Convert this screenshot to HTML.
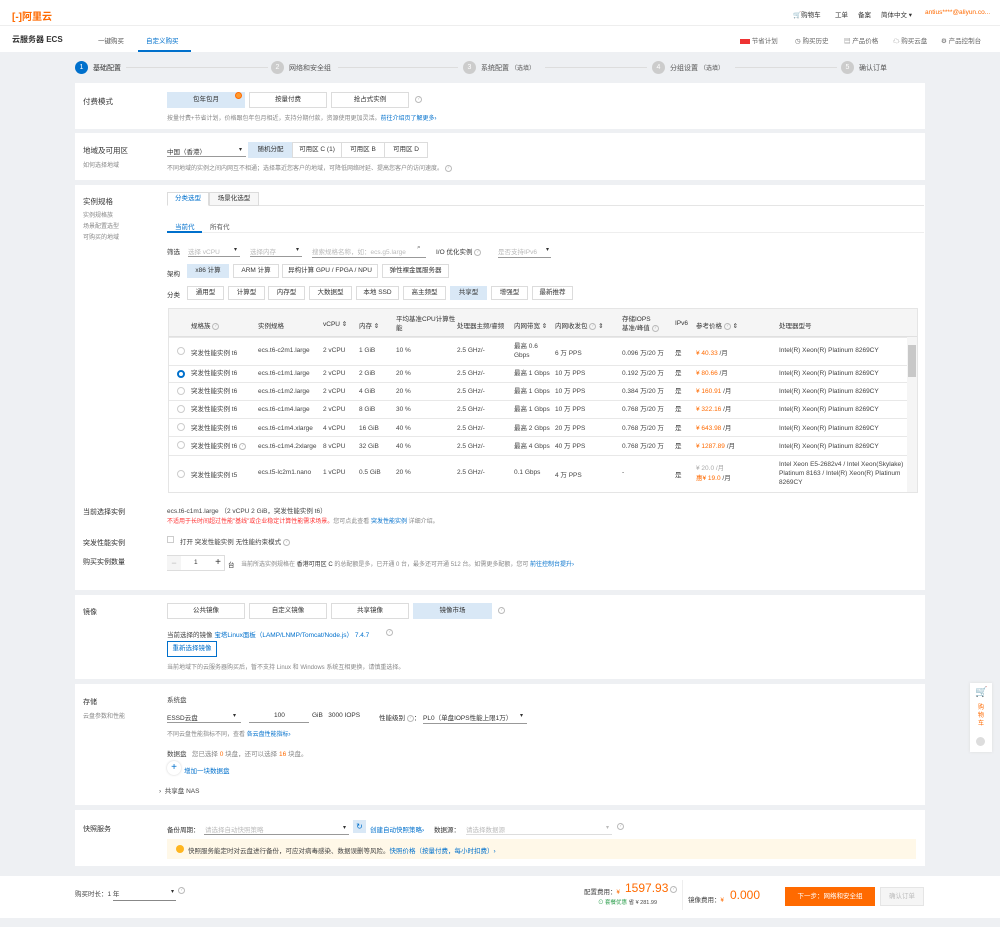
<!DOCTYPE html>
<html><head><meta charset="utf-8"><style>
*{margin:0;padding:0;box-sizing:border-box}
body{width:1000px;height:927px;background:#eef0f3;font-family:"Liberation Sans","Noto Sans CJK SC",sans-serif;font-size:6.5px;color:#333;position:relative;overflow:hidden}
.a{position:absolute;white-space:nowrap}
.w{position:absolute;background:#fff;left:75px;width:850px}
.btn{position:absolute;border:1px solid #dcdcdc;background:#fff;text-align:center;color:#333}
.sel{background:#d9e8f6;border-color:#d9e8f6}
.g{color:#888}.bl{color:#0070cc}.or{color:#ff6a00}
.lbl{font-size:7.5px;color:#333}
.ul{position:absolute;border-bottom:1px solid #999}
.q{display:inline-block;width:7px;height:7px;border:1px solid #bbb;border-radius:50%;font-size:5px;line-height:5px;text-align:center;color:#bbb;vertical-align:middle}
.row{position:absolute;left:169px;width:738px;border-top:1px solid #e8e8e8}
.rd{position:absolute;left:8px;width:8px;height:8px;border:1px solid #ccc;border-radius:50%;background:#fff}
</style></head><body>
<!-- header -->
<div class="a" style="left:0;top:0;width:1000px;height:52px;background:#fff"></div>
<div class="a" style="left:0;top:25px;width:1000px;height:1px;background:#eee"></div>
<div class="a" style="left:12px;top:8px;font-size:10px;color:#ff6a00;font-weight:bold">[-]阿里云</div>
<div class="a" style="left:793px;top:9px;font-size:6.5px">🛒购物车</div>
<div class="a" style="left:835px;top:9px">工单</div>
<div class="a" style="left:858px;top:9px">备案</div>
<div class="a" style="left:881px;top:9px">简体中文 ▾</div>
<div class="a or" style="left:925px;top:9px">antius****@aliyun.co...</div>
<div class="a" style="left:12px;top:34px;font-size:8px;font-weight:bold">云服务器 ECS</div>
<div class="a" style="left:98px;top:35px;color:#555">一键购买</div>
<div class="a bl" style="left:146px;top:35px">自定义购买</div>
<div class="a" style="left:138px;top:50px;width:53px;height:2px;background:#0070cc"></div>
<div class="a" style="left:740px;top:35px;color:#666"><span style="display:inline-block;width:10px;height:5px;background:#e33;vertical-align:middle"></span> 节省计划</div>
<div class="a" style="left:795px;top:35px;color:#666">◷ 购买历史</div>
<div class="a" style="left:844px;top:35px;color:#666">▤ 产品价格</div>
<div class="a" style="left:893px;top:35px;color:#666">☁ 购买云盘</div>
<div class="a" style="left:941px;top:35px;color:#666">⚙ 产品控制台</div>
<!-- steps -->
<div class="a" style="left:75px;top:61px;width:13px;height:13px;border-radius:50%;background:#0070cc;color:#fff;text-align:center;line-height:13px;font-size:7px">1</div>
<div class="a" style="left:93px;top:63px;font-size:7px">基础配置</div>
<div class="a" style="left:126px;top:67px;width:142px;height:1px;background:#ddd"></div>
<div class="a" style="left:271px;top:61px;width:13px;height:13px;border-radius:50%;background:#ccc;color:#fff;text-align:center;line-height:13px;font-size:7px">2</div>
<div class="a" style="left:289px;top:63px;font-size:7px;color:#555">网络和安全组</div>
<div class="a" style="left:338px;top:67px;width:120px;height:1px;background:#ddd"></div>
<div class="a" style="left:463px;top:61px;width:13px;height:13px;border-radius:50%;background:#ccc;color:#fff;text-align:center;line-height:13px;font-size:7px">3</div>
<div class="a" style="left:481px;top:63px;font-size:7px;color:#555">系统配置 <span style="font-size:6px">（选填）</span></div>
<div class="a" style="left:545px;top:67px;width:102px;height:1px;background:#ddd"></div>
<div class="a" style="left:652px;top:61px;width:13px;height:13px;border-radius:50%;background:#ccc;color:#fff;text-align:center;line-height:13px;font-size:7px">4</div>
<div class="a" style="left:670px;top:63px;font-size:7px;color:#555">分组设置 <span style="font-size:6px">（选填）</span></div>
<div class="a" style="left:735px;top:67px;width:102px;height:1px;background:#ddd"></div>
<div class="a" style="left:841px;top:61px;width:13px;height:13px;border-radius:50%;background:#ccc;color:#fff;text-align:center;line-height:13px;font-size:7px">5</div>
<div class="a" style="left:859px;top:63px;font-size:7px;color:#555">确认订单</div>

<!-- 付费模式 -->
<div class="w" style="top:83px;height:46px"></div>
<div class="a lbl" style="left:83px;top:96px">付费模式</div>
<div class="btn sel" style="left:167px;top:92px;width:78px;height:16px;line-height:14px">包年包月</div>
<div class="a" style="left:235px;top:92px;width:7px;height:7px;border-radius:50%;background:#ff9a2e;border:1.5px solid #ff6a00"></div>
<div class="btn" style="left:249px;top:92px;width:78px;height:16px;line-height:14px">按量付费</div>
<div class="btn" style="left:331px;top:92px;width:78px;height:16px;line-height:14px">抢占式实例</div>
<div class="a" style="left:415px;top:96px"><span class="q">?</span></div>
<div class="a g" style="left:167px;top:113px;font-size:6px">按量付费+节省计划，价格跟包年包月相近，支持分期付款，资源使用更加灵活。<span class="bl">前往介绍页了解更多›</span></div>

<!-- 地域 -->
<div class="w" style="top:133px;height:47px"></div>
<div class="a lbl" style="left:83px;top:145px">地域及可用区</div>
<div class="a g" style="left:83px;top:160px;font-size:6px">如何选择地域</div>
<div class="a" style="left:167px;top:146px">中国（香港）</div>
<div class="a" style="left:239px;top:146px;font-size:6px">▾</div>
<div class="ul" style="left:167px;top:156px;width:79px"></div>
<div class="btn sel" style="left:248px;top:142px;width:45px;height:16px;line-height:14px">随机分配</div>
<div class="btn" style="left:292px;top:142px;width:50px;height:16px;line-height:14px">可用区 C (1)</div>
<div class="btn" style="left:341px;top:142px;width:44px;height:16px;line-height:14px">可用区 B</div>
<div class="btn" style="left:384px;top:142px;width:44px;height:16px;line-height:14px">可用区 D</div>
<div class="a g" style="left:167px;top:163px;font-size:6px">不同地域的实例之间内网互不相通；选择靠近您客户的地域，可降低网络时延、提高您客户的访问速度。 <span class="q">?</span></div>

<!-- 实例规格 -->
<div class="w" style="top:185px;height:405px"></div>
<div class="a lbl" style="left:83px;top:196px">实例规格</div>
<div class="a g" style="left:83px;top:211px;font-size:6px;line-height:11px">实例规格族<br>场景配置选型<br>可购买的地域</div>
<div class="btn" style="left:167px;top:192px;width:42px;height:14px;line-height:12px;border-bottom-color:#fff;color:#0070cc">分类选型</div>
<div class="btn" style="left:209px;top:192px;width:50px;height:14px;line-height:12px;background:#f7f7f7">场景化选型</div>
<div class="a" style="left:259px;top:205px;width:665px;height:1px;background:#e5e5e5"></div>
<div class="a bl" style="left:175px;top:221px">当前代</div>
<div class="a" style="left:210px;top:221px;color:#555">所有代</div>
<div class="a" style="left:167px;top:231px;width:35px;height:2px;background:#0070cc"></div>
<div class="a" style="left:202px;top:232px;width:722px;height:1px;background:#eee"></div>
<div class="a" style="left:167px;top:246px">筛选</div>
<div class="a" style="left:188px;top:246px;color:#bbb">选择 vCPU</div><div class="a" style="left:234px;top:246px;font-size:6px">▾</div><div class="ul" style="left:188px;top:256px;width:52px"></div>
<div class="a" style="left:250px;top:246px;color:#bbb">选择内存</div><div class="a" style="left:296px;top:246px;font-size:6px">▾</div><div class="ul" style="left:250px;top:256px;width:52px"></div>
<div class="a" style="left:312px;top:246px;color:#bbb">搜索规格名称，如：ecs.g5.large</div><div class="a" style="left:417px;top:244px;color:#666">⌕</div><div class="ul" style="left:312px;top:257px;width:114px"></div>
<div class="a" style="left:436px;top:246px">I/O 优化实例 <span class="q">?</span></div>
<div class="a" style="left:498px;top:246px;color:#bbb">是否支持IPv6</div><div class="a" style="left:546px;top:246px;font-size:6px">▾</div><div class="ul" style="left:498px;top:257px;width:53px"></div>
<div class="a" style="left:167px;top:268px">架构</div>
<div class="btn sel" style="left:187px;top:264px;width:42px;height:14px;line-height:12px">x86 计算</div>
<div class="btn" style="left:233px;top:264px;width:46px;height:14px;line-height:12px">ARM 计算</div>
<div class="btn" style="left:282px;top:264px;width:96px;height:14px;line-height:12px">异构计算 GPU / FPGA / NPU</div>
<div class="btn" style="left:382px;top:264px;width:67px;height:14px;line-height:12px">弹性裸金属服务器</div>
<div class="a" style="left:167px;top:289px">分类</div>
<div class="btn" style="left:187px;top:286px;width:37px;height:14px;line-height:12px">通用型</div>
<div class="btn" style="left:228px;top:286px;width:37px;height:14px;line-height:12px">计算型</div>
<div class="btn" style="left:268px;top:286px;width:37px;height:14px;line-height:12px">内存型</div>
<div class="btn" style="left:309px;top:286px;width:43px;height:14px;line-height:12px">大数据型</div>
<div class="btn" style="left:356px;top:286px;width:43px;height:14px;line-height:12px">本地 SSD</div>
<div class="btn" style="left:403px;top:286px;width:43px;height:14px;line-height:12px">高主频型</div>
<div class="btn sel" style="left:450px;top:286px;width:37px;height:14px;line-height:12px">共享型</div>
<div class="btn" style="left:491px;top:286px;width:37px;height:14px;line-height:12px">增强型</div>
<div class="btn" style="left:532px;top:286px;width:41px;height:14px;line-height:12px">最新推荐</div>

<!-- table -->
<div class="a" style="left:168px;top:308px;width:750px;height:185px;border:1px solid #e5e5e5;background:#fff"></div>
<div class="a" style="left:169px;top:309px;width:748px;height:28px;background:#f5f5f5;border-bottom:1px solid #e0e0e0"></div>
<div class="a" style="left:191px;top:320px">规格族 <span class="q">?</span></div>
<div class="a" style="left:258px;top:320px">实例规格</div>
<div class="a" style="left:323px;top:320px">vCPU ⇕</div>
<div class="a" style="left:359px;top:320px">内存 ⇕</div>
<div class="a" style="left:396px;top:315px;line-height:9px">平均基准CPU计算性<br>能</div>
<div class="a" style="left:457px;top:320px">处理器主频/睿频</div>
<div class="a" style="left:514px;top:320px">内网带宽 ⇕</div>
<div class="a" style="left:555px;top:320px">内网收发包 <span class="q">?</span> ⇕</div>
<div class="a" style="left:622px;top:315px;line-height:9px">存储IOPS<br>基准/峰值 <span class="q">?</span></div>
<div class="a" style="left:675px;top:320px">IPv6</div>
<div class="a" style="left:696px;top:320px">参考价格 <span class="q">?</span> ⇕</div>
<div class="a" style="left:779px;top:320px">处理器型号</div>
<div class="a" style="left:907px;top:337px;width:10px;height:155px;background:#f5f5f5"></div>
<div class="a" style="left:908px;top:345px;width:8px;height:32px;background:#c8c8c8"></div>

<div class="row" style="top:337px;height:28px"><span class="rd" style="top:9px"></span></div>
<div class="row" style="top:365px;height:18px"><span class="rd" style="top:4px;border:2.5px solid #0070cc"></span></div>
<div class="row" style="top:382px;height:18px"><span class="rd" style="top:4px"></span></div>
<div class="row" style="top:400px;height:18px"><span class="rd" style="top:4px"></span></div>
<div class="row" style="top:418px;height:18px"><span class="rd" style="top:4px"></span></div>
<div class="row" style="top:436px;height:19px"><span class="rd" style="top:4px"></span></div>
<div class="row" style="top:455px;height:37px"><span class="rd" style="top:14px"></span></div>

<div class="a" style="left:191px;top:347px;color:#444">突发性能实例 t6</div>
<div class="a" style="left:191px;top:365px;line-height:18.2px;color:#444">突发性能实例 t6<br>突发性能实例 t6<br>突发性能实例 t6<br>突发性能实例 t6<br>突发性能实例 t6 <span class="q">?</span></div>
<div class="a" style="left:191px;top:469px;color:#444">突发性能实例 t5</div>
<div class="a" style="left:258px;top:347px;color:#444">ecs.t6-c2m1.large</div>
<div class="a" style="left:258px;top:365px;line-height:18.2px;color:#444">ecs.t6-c1m1.large<br>ecs.t6-c1m2.large<br>ecs.t6-c1m4.large<br>ecs.t6-c1m4.xlarge<br>ecs.t6-c1m4.2xlarge</div>
<div class="a" style="left:258px;top:469px;color:#444">ecs.t5-lc2m1.nano</div>
<div class="a" style="left:323px;top:347px;color:#444">2 vCPU</div>
<div class="a" style="left:323px;top:365px;line-height:18.2px;color:#444">2 vCPU<br>2 vCPU<br>2 vCPU<br>4 vCPU<br>8 vCPU</div>
<div class="a" style="left:323px;top:469px;color:#444">1 vCPU</div>
<div class="a" style="left:359px;top:347px;color:#444">1 GiB</div>
<div class="a" style="left:359px;top:365px;line-height:18.2px;color:#444">2 GiB<br>4 GiB<br>8 GiB<br>16 GiB<br>32 GiB</div>
<div class="a" style="left:359px;top:469px;color:#444">0.5 GiB</div>
<div class="a" style="left:396px;top:347px;color:#444">10 %</div>
<div class="a" style="left:396px;top:365px;line-height:18.2px;color:#444">20 %<br>20 %<br>30 %<br>40 %<br>40 %</div>
<div class="a" style="left:396px;top:469px;color:#444">20 %</div>
<div class="a" style="left:457px;top:347px;color:#444">2.5 GHz/-</div>
<div class="a" style="left:457px;top:365px;line-height:18.2px;color:#444">2.5 GHz/-<br>2.5 GHz/-<br>2.5 GHz/-<br>2.5 GHz/-<br>2.5 GHz/-</div>
<div class="a" style="left:457px;top:469px;color:#444">2.5 GHz/-</div>
<div class="a" style="left:514px;top:342px;line-height:9px;color:#444">最高 0.6<br>Gbps</div>
<div class="a" style="left:514px;top:365px;line-height:18.2px;color:#444">最高 1 Gbps<br>最高 1 Gbps<br>最高 1 Gbps<br>最高 2 Gbps<br>最高 4 Gbps</div>
<div class="a" style="left:514px;top:469px;color:#444">0.1 Gbps</div>
<div class="a" style="left:555px;top:347px;color:#444">6 万 PPS</div>
<div class="a" style="left:555px;top:365px;line-height:18.2px;color:#444">10 万 PPS<br>10 万 PPS<br>10 万 PPS<br>20 万 PPS<br>40 万 PPS</div>
<div class="a" style="left:555px;top:469px;color:#444">4 万 PPS</div>
<div class="a" style="left:622px;top:347px;color:#444">0.096 万/20 万</div>
<div class="a" style="left:622px;top:365px;line-height:18.2px;color:#444">0.192 万/20 万<br>0.384 万/20 万<br>0.768 万/20 万<br>0.768 万/20 万<br>0.768 万/20 万</div>
<div class="a" style="left:622px;top:469px;color:#444">-</div>
<div class="a" style="left:675px;top:347px;color:#444">是</div>
<div class="a" style="left:675px;top:365px;line-height:18.2px;color:#444">是<br>是<br>是<br>是<br>是</div>
<div class="a" style="left:675px;top:469px;color:#444">是</div>
<div class="a or" style="left:696px;top:347px">¥ 40.33 <span style="color:#444">/月</span></div>
<div class="a or" style="left:696px;top:365px;line-height:18.2px">¥ 80.66 <span style="color:#444">/月</span><br>¥ 160.91 <span style="color:#444">/月</span><br>¥ 322.16 <span style="color:#444">/月</span><br>¥ 643.98 <span style="color:#444">/月</span><br>¥ 1287.89 <span style="color:#444">/月</span></div>
<div class="a" style="left:696px;top:464px;line-height:10px;color:#aaa">¥ 20.0 /月<br><span class="or">惠¥ 19.0 <span style="color:#444">/月</span></span></div>
<div class="a" style="left:779px;top:347px;color:#444">Intel(R) Xeon(R) Platinum 8269CY</div>
<div class="a" style="left:779px;top:365px;line-height:18.2px;color:#444">Intel(R) Xeon(R) Platinum 8269CY<br>Intel(R) Xeon(R) Platinum 8269CY<br>Intel(R) Xeon(R) Platinum 8269CY<br>Intel(R) Xeon(R) Platinum 8269CY<br>Intel(R) Xeon(R) Platinum 8269CY</div>
<div class="a" style="left:779px;top:460px;line-height:9px;color:#444">Intel Xeon E5-2682v4 / Intel Xeon(Skylake)<br>Platinum 8163 / Intel(R) Xeon(R) Platinum<br>8269CY</div>

<div class="a lbl" style="left:83px;top:507px;font-size:7px">当前选择实例</div>
<div class="a" style="left:167px;top:505px;color:#444">ecs.t6-c1m1.large （2 vCPU 2 GiB，突发性能实例 t6）</div>
<div class="a" style="left:167px;top:516px;font-size:6px"><span style="color:#f33">不适用于长时间超过性能"基线"或企业稳定计算性能需求场景。</span><span class="g">您可点此查看 </span><span class="bl">突发性能实例</span><span class="g"> 详细介绍。</span></div>
<div class="a lbl" style="left:83px;top:538px;font-size:7px">突发性能实例</div>
<div class="a" style="left:167px;top:536px;width:7px;height:7px;border:1px solid #ccc"></div>
<div class="a" style="left:180px;top:536px;color:#444">打开 突发性能实例 无性能约束模式 <span class="q">?</span></div>
<div class="a lbl" style="left:83px;top:557px;font-size:7px">购买实例数量</div>
<div class="a" style="left:167px;top:555px;width:58px;height:16px;border:1px solid #ddd"></div>
<div class="a" style="left:167px;top:556px;width:14px;height:14px;background:#f5f5f5;color:#bbb;text-align:center;line-height:14px;font-size:9px">−</div>
<div class="a" style="left:194px;top:559px">1</div>
<div class="a" style="left:211px;top:556px;width:14px;height:14px;text-align:center;line-height:14px;font-size:10px">+</div>
<div class="a" style="left:228px;top:559px">台</div>
<div class="a g" style="left:241px;top:559px;font-size:6px">当前所选实例规格在 <span style="color:#333">香港可用区 C</span> 的总配额是多，已开通 0 台，最多还可开通 512 台。如需更多配额，您可 <span class="bl">前往控制台提升›</span></div>

<!-- 镜像 -->
<div class="w" style="top:595px;height:84px"></div>
<div class="a lbl" style="left:83px;top:607px;font-size:7px">镜像</div>
<div class="btn" style="left:167px;top:603px;width:78px;height:16px;line-height:14px">公共镜像</div>
<div class="btn" style="left:249px;top:603px;width:78px;height:16px;line-height:14px">自定义镜像</div>
<div class="btn" style="left:331px;top:603px;width:78px;height:16px;line-height:14px">共享镜像</div>
<div class="btn sel" style="left:413px;top:603px;width:79px;height:16px;line-height:14px">镜像市场</div>
<div class="a" style="left:498px;top:607px"><span class="q">?</span></div>
<div class="a" style="left:167px;top:629px;color:#444">当前选择的镜像 <span class="bl">宝塔Linux面板（LAMP/LNMP/Tomcat/Node.js） 7.4.7</span></div>
<div class="a" style="left:386px;top:629px"><span class="q">?</span></div>
<div class="a bl" style="left:167px;top:641px;width:50px;height:16px;border:1px solid #0070cc;text-align:center;line-height:14px">重新选择镜像</div>
<div class="a g" style="left:167px;top:662px;font-size:6px">当前地域下的云服务器购买后，暂不支持 Linux 和 Windows 系统互相更换，请慎重选择。</div>

<!-- 存储 -->
<div class="w" style="top:684px;height:121px"></div>
<div class="a lbl" style="left:83px;top:697px;font-size:7px">存储</div>
<div class="a g" style="left:83px;top:711px;font-size:6px">云盘参数和性能</div>
<div class="a" style="left:167px;top:694px;color:#444">系统盘</div>
<div class="a" style="left:167px;top:712px">ESSD云盘</div><div class="a" style="left:233px;top:712px;font-size:6px">▾</div><div class="ul" style="left:167px;top:722px;width:74px"></div>
<div class="a" style="left:274px;top:712px">100</div><div class="ul" style="left:249px;top:722px;width:60px"></div>
<div class="a" style="left:312px;top:712px">GiB &nbsp; 3000 IOPS</div>
<div class="a" style="left:379px;top:712px">性能级别 <span class="q">?</span>：</div>
<div class="a" style="left:423px;top:712px">PL0（单盘IOPS性能上限1万）</div><div class="a" style="left:520px;top:712px;font-size:6px">▾</div><div class="ul" style="left:423px;top:723px;width:104px"></div>
<div class="a g" style="left:167px;top:729px;font-size:6px">不同云盘性能指标不同，查看 <span class="bl">各云盘性能指标›</span></div>
<div class="a" style="left:167px;top:748px;color:#444">数据盘 &nbsp; <span class="g">您已选择 <span class="or">0</span> 块盘，还可以选择 <span class="or">16</span> 块盘。</span></div>
<div class="a" style="left:167px;top:761px;width:14px;height:14px;border-radius:50%;background:#fff;box-shadow:0 0 2px #ccc;color:#0070cc;text-align:center;line-height:14px;font-size:10px">+</div>
<div class="a bl" style="left:184px;top:765px">增加一块数据盘</div>
<div class="a" style="left:159px;top:785px;color:#444">› &nbsp;共享盘 NAS</div>

<!-- 快照 -->
<div class="w" style="top:810px;height:56px"></div>
<div class="a lbl" style="left:83px;top:824px;font-size:7px">快照服务</div>
<div class="a" style="left:167px;top:824px">备份周期：</div>
<div class="a" style="left:205px;top:824px;color:#bbb">请选择自动快照策略</div><div class="a" style="left:343px;top:824px;font-size:6px">▾</div><div class="ul" style="left:204px;top:834px;width:145px"></div>
<div class="a" style="left:353px;top:820px;width:13px;height:13px;background:#d9e8f6;color:#0070cc;text-align:center;line-height:13px;font-size:8px">↻</div>
<div class="a bl" style="left:370px;top:824px">创建自动快照策略›</div>
<div class="a" style="left:434px;top:824px">数据源：</div>
<div class="a" style="left:466px;top:824px;color:#bbb">请选择数据源</div><div class="a" style="left:606px;top:824px;font-size:6px;color:#bbb">▾</div><div class="ul" style="left:466px;top:834px;width:146px;border-color:#ddd"></div>
<div class="a" style="left:617px;top:823px"><span class="q">?</span></div>
<div class="a" style="left:167px;top:839px;width:749px;height:20px;background:#fff8e8"></div>
<div class="a" style="left:176px;top:845px;width:8px;height:8px;border-radius:50%;background:#ffb620"></div>
<div class="a" style="left:188px;top:845px;color:#444">快照服务能定时对云盘进行备份，可应对病毒感染、数据误删等风险。<span class="bl">快照价格（按量付费，每小时扣费）›</span></div>

<!-- bottom bar -->
<div class="a" style="left:0;top:876px;width:1000px;height:42px;background:#fff"></div>
<div class="a" style="left:75px;top:888px;color:#444">购买时长：1 年</div>
<div class="a" style="left:171px;top:888px;font-size:6px">▾</div>
<div class="a" style="left:178px;top:887px"><span class="q">?</span></div>
<div class="ul" style="left:113px;top:900px;width:63px;border-color:#888"></div>
<div class="a" style="left:584px;top:886px;color:#444">配置费用：<span class="or" style="font-size:6px">¥</span></div>
<div class="a or" style="left:625px;top:881px;font-size:12px">1597.93</div>
<div class="a" style="left:670px;top:886px"><span class="q">?</span></div>
<div class="a" style="left:598px;top:898px;font-size:5.5px;color:#2a9d4b">⊙ 套餐优惠 <span style="color:#444">省 ¥ 281.99</span></div>
<div class="a" style="left:682px;top:880px;width:1px;height:30px;background:#eee"></div>
<div class="a" style="left:688px;top:894px;color:#444">镜像费用：<span class="or" style="font-size:6px">¥</span></div>
<div class="a or" style="left:730px;top:888px;font-size:12px">0.000</div>
<div class="a" style="left:785px;top:887px;width:90px;height:19px;background:#ff6a00;color:#fff;text-align:center;line-height:19px">下一步：网络和安全组</div>
<div class="a" style="left:880px;top:887px;width:44px;height:19px;background:#f5f5f5;border:1px solid #e5e5e5;color:#bbb;text-align:center;line-height:17px">确认订单</div>

<!-- floating cart -->
<div class="a" style="left:970px;top:683px;width:22px;height:69px;background:#fff;box-shadow:0 0 3px #ddd"></div>
<div class="a or" style="left:975px;top:687px;font-size:10px">🛒</div>
<div class="a or" style="left:978px;top:704px;font-size:6px;line-height:8px;white-space:normal;width:7px">购物车</div>
<div class="a" style="left:976px;top:737px;width:9px;height:9px;border-radius:50%;background:#ddd"></div>
</body></html>
